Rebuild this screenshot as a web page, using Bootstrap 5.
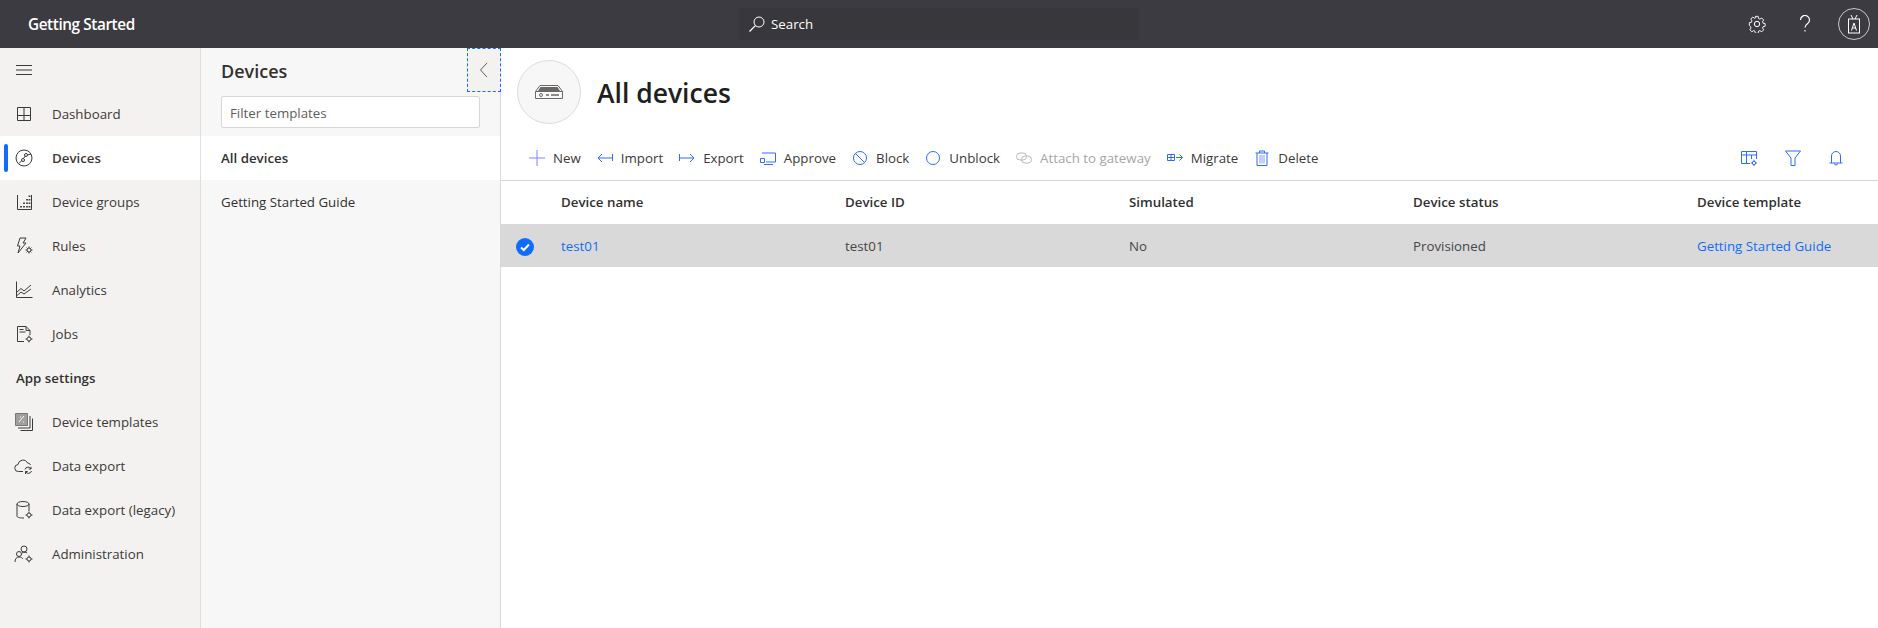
<!DOCTYPE html>
<html lang="en">
<head>
  <meta charset="UTF-8">
  <title>Getting Started</title>
  <link href="https://cdn.jsdelivr.net/npm/bootstrap@5.3.0/dist/css/bootstrap.min.css" rel="stylesheet">
  <style>
    html, body {
      height: 100%;
    }

    body {
      font-family: "Open Sans", "Noto Sans", sans-serif;
      font-size: 13.3px;
      color: #323130;
      background: #fff;
      overflow: hidden;
    }

    svg {
      display: block;
      flex: none;
      fill: none;
      stroke: currentColor;
      stroke-width: 1;
    }

    .top-bar {
      height: 48px;
      background: #3c3b41;
      color: #fff;
    }

    .app-name {
      width: 739px;
      padding-left: 28px;
      font-size: 15.3px;
      font-weight: 600;
      letter-spacing: -0.4px;
    }

    .search-box {
      width: 400px;
      height: 32px;
      background: #38373c;
      border-radius: 2px;
      padding-left: 9px;
      gap: 5px;
    }

    .search-box span {
      padding-top: 2px;
    }

    .top-icons {
      margin-left: auto;
      padding-right: 8px;
      gap: 24px;
    }

    .top-icons button {
      width: 24px;
      height: 24px;
      padding: 0;
      border: 0;
      background: none;
      color: #fff;
    }

    .avatar-ring {
      width: 32px;
      height: 32px;
      border: 1px solid #c8c8c8;
      border-radius: 50%;
      margin-left: -3px;
    }

    .page-body {
      height: 580px;
    }

    .side-nav {
      width: 201px;
      background: #f3f2f1;
      border-right: 1px solid #e1dfdd;
    }

    .nav-row {
      height: 44px;
      padding-left: 16px;
      color: #3b3a39;
      text-decoration: none;
      position: relative;
    }

    .nav-label {
      padding-top: 2px;
    }

    .nav-row svg {
      width: 20px;
      height: 20px;
      margin-left: -2px;
      margin-right: 18px;
    }

    .nav-row.is-active {
      background: #fff;
      font-weight: 600;
    }

    .nav-row.is-active::before {
      content: "";
      position: absolute;
      left: 4px;
      top: 8px;
      width: 4px;
      height: 28px;
      border-radius: 2px;
      background: #0f6cff;
    }

    .nav-title {
      height: 44px;
      padding: 2px 0 0 16px;
      font-weight: 600;
    }

    .template-panel {
      width: 300px;
      background: #f7f7f7;
      border-right: 1px solid #d8d8d8;
      position: relative;
    }

    .panel-title {
      padding: 10px 20px 0;
      height: 48px;
      font-size: 18px;
      font-weight: 600;
    }

    .panel-filter {
      margin: 0 20px 8px;
      width: 259px;
      height: 32px;
      padding: 1px 8px 0;
      border: 1px solid #d6d6d6;
      border-radius: 2px;
      font-size: 13.3px;
      color: #323130;
    }

    .panel-filter::placeholder {
      color: #605e5c;
    }

    .template-row {
      height: 44px;
      padding: 2px 0 0 20px;
      color: #323130;
      text-decoration: none;
    }

    .template-row.is-active {
      background: #fff;
      font-weight: 600;
    }

    .collapse-btn {
      position: absolute;
      top: 0;
      right: -1px;
      width: 34px;
      height: 44px;
      padding: 0;
      background: #f3f2f1;
      border: 1px dashed #0f6cff;
      color: #605e5c;
    }

    .device-area {
      min-width: 0;
    }

    .device-head {
      height: 88px;
      padding: 12px 0 0 16px;
      gap: 16px;
    }

    .device-glyph {
      width: 64px;
      height: 64px;
      background: #f7f7f7;
      border: 1px solid #dcdcdc;
      border-radius: 50%;
      color: #6a6866;
    }

    .device-head h1 {
      padding-top: 18px;
      font-size: 26.5px;
      font-weight: 600;
      margin: 0;
      color: #201f1e;
    }

    .cmd-bar {
      height: 45px;
      padding: 0 31px 0 20px;
      border-bottom: 1px solid #d8d8d8;
    }

    .cmd-btn {
      padding: 0 8px;
      gap: 8px;
      border: 0;
      background: none;
      color: #3b3a39;
      font-size: 13.3px;
      white-space: nowrap;
    }

    .cmd-btn span {
      padding-top: 2px;
    }

    .cmd-btn svg {
      color: #2f6bff;
    }

    .cmd-btn svg.plus-mark {
      color: #7d86ff;
    }

    .cmd-btn:disabled {
      color: #a8a6a4;
      opacity: 1;
    }

    .cmd-btn:disabled svg {
      color: #bdbbb9;
    }

    .cmd-side {
      margin-left: auto;
      gap: 28px;
      color: #2f6bff;
    }

    .device-grid {
      table-layout: fixed;
      margin: 0;
      --bs-table-color: #323130;
    }

    .device-grid th, .device-grid td {
      height: 43px;
      padding: 0;
      vertical-align: middle;
      border: 0;
      font-size: 13.3px;
    }

    .device-grid th {
      font-weight: 600;
    }

    .device-grid tbody td {
      --bs-table-bg: #d9d9d9;
      color: #484644;
      padding-top: 2px;
    }

    .device-grid a {
      color: #0f6cff;
      text-decoration: none;
    }

    .col-check {
      width: 60px;
    }

    .col-data {
      width: 284px;
    }

    .check-dot {
      margin-left: 15px;
    }
  </style>
</head>
<body>
  <header class="top-bar d-flex align-items-center">
    <div class="app-name">Getting Started</div>
    <div class="search-box d-flex align-items-center">
      <svg width="18" height="18" viewBox="0 0 18 18"><circle cx="11" cy="7" r="5"/><path d="M7.400 10.600 1.500 16.500" stroke-width="1.300"/></svg>
      <span>Search</span>
    </div>
    <div class="top-icons d-flex align-items-center">
      <button type="button" class="d-flex align-items-center justify-content-center" aria-label="Settings">
        <svg width="18" height="18" viewBox="0 0 18 18" stroke-width="1.300"><circle cx="9" cy="9" r="2.700"/><path d="M7.500 1h3l.4 2.300 1.500.7 2-1.200 2 2.100-1.200 2 .6 1.500 2.200.4v2.800l-2.200.5-.6 1.400 1.200 2-2 2.100-2-1.200-1.500.6-.4 2.300h-3l-.4-2.300-1.500-.6-2 1.200-2-2.100 1.200-2-.6-1.400L1 10.600V7.800l2.200-.4.6-1.500-1.200-2 2-2.100 2 1.200 1.500-.7z" transform="translate(.4 .4) scale(.93)"/></svg>
      </button>
      <button type="button" class="d-flex align-items-center justify-content-center" aria-label="Help">
        <svg width="14" height="18" viewBox="0 0 14 18"><path d="M2.500 5a4.500 4.500 0 1 1 7 3.700C8 9.800 7 10.500 7 12.500M7 15v1.500" stroke-width="1.200"/></svg>
      </button>
      <div class="avatar-ring d-flex align-items-center justify-content-center">
        <svg width="16" height="20" viewBox="0 0 16 20"><path d="M5 1l2 4M11 1 9 5"/><rect x="2.500" y="5" width="11" height="14"/><path d="M5.500 16.500 8 9l2.500 7.500M6.300 14h3.400"/></svg>
      </div>
    </div>
  </header>

  <div class="page-body d-flex">
    <nav class="side-nav flex-shrink-0">
      <a class="nav-row d-flex align-items-center" href="#" aria-label="Menu">
        <svg viewBox="0 0 20 20"><path d="M2 5.500h16M2 10h16M2 14.500h16"/></svg>
      </a>
      <a class="nav-row d-flex align-items-center" href="#">
        <svg viewBox="0 0 20 20"><path d="M3.500 3.500h13v13h-13zM3.500 11.500h13M10 3.500v13"/></svg>
        <span class="nav-label">Dashboard</span>
      </a>
      <a class="nav-row is-active d-flex align-items-center" href="#">
        <svg viewBox="0 0 20 20"><circle cx="10" cy="10" r="8"/><circle cx="12" cy="7" r="1.500"/><circle cx="9" cy="12" r="1.500"/><path d="M11 8.200 9.500 10.500M7.700 12.700 5 15.500M13.500 7 17 6"/></svg>
        <span class="nav-label">Devices</span>
      </a>
      <a class="nav-row d-flex align-items-center" href="#">
        <svg viewBox="0 0 20 20"><path d="M3.500 3v14.500h14V3"/><path d="M7 15.500V14M10 15.500V14M13 15.500V14M15.500 15.500V14M10 12v-1.500M13 12v-1.500M15.500 12v-1.500M13 8.500V7M15.500 8.500V7M15.500 5V3.500" stroke-width="1.800"/></svg>
        <span class="nav-label">Device groups</span>
      </a>
      <a class="nav-row d-flex align-items-center" href="#">
        <svg viewBox="0 0 20 20"><path d="M6 2h6L9 7h3l-8 10 2-7H3.500z"/><circle cx="15" cy="14" r="2"/><path d="M15 10.500v1.500M15 16v1.500M11.500 14H13M17 14h1.500M12.600 11.600l1 1M16.400 15.400l1 1M17.400 11.600l-1 1M13.600 15.400l-1 1"/></svg>
        <span class="nav-label">Rules</span>
      </a>
      <a class="nav-row d-flex align-items-center" href="#">
        <svg viewBox="0 0 20 20"><path d="M2.500 1.500v16h16M3 12l4-3.500 3 2.500 7-6M3 15.500l4-3.500 3 2 7-5"/></svg>
        <span class="nav-label">Analytics</span>
      </a>
      <a class="nav-row d-flex align-items-center" href="#">
        <svg viewBox="0 0 20 20"><path d="M10 17.500H3.500v-15H12l4 4V11M12 2.500v4h4M5.500 5.500h4M5.500 8h6"/><circle cx="15" cy="15" r="2"/><path d="M15 11.500V13M15 17v1.500M11.500 15H13M17 15h1.500"/></svg>
        <span class="nav-label">Jobs</span>
      </a>
      <div class="nav-title d-flex align-items-center">App settings</div>
      <a class="nav-row d-flex align-items-center" href="#">
        <svg viewBox="0 0 20 20"><path d="M1.500 1.500h12v12h-12z" fill="#a19f9d" stroke="#797775"/><path d="M5 10l5-6M6 5h1M9 10h1" stroke="#fff"/><path d="M4 16h12V4M6.500 18.500h12v-12"/></svg>
        <span class="nav-label">Device templates</span>
      </a>
      <a class="nav-row d-flex align-items-center" href="#">
        <svg viewBox="0 0 20 20"><path d="M9 15.500H4.500a3.500 3.500 0 0 1-.5-7 5 5 0 0 1 9.500-1.500 3 3 0 0 1 3 2"/><path d="M11 13.500a3.200 3.200 0 0 1 6-.5M17.500 15a3.200 3.200 0 0 1-6 .5M17 10.800V13h-2.200M11.500 18v-2.500h2.200"/></svg>
        <span class="nav-label">Data export</span>
      </a>
      <a class="nav-row d-flex align-items-center" href="#">
        <svg viewBox="0 0 20 20"><ellipse cx="9" cy="4" rx="6" ry="2.500"/><path d="M3 4v12c0 1.300 2.500 2 6 2h1M15 4v7"/><circle cx="15" cy="15" r="2"/><path d="M15 11.500V13M15 17v1.500M11.500 15H13M17 15h1.500"/></svg>
        <span class="nav-label">Data export (legacy)</span>
      </a>
      <a class="nav-row d-flex align-items-center" href="#">
        <svg viewBox="0 0 20 20"><circle cx="10" cy="5" r="3"/><circle cx="5" cy="10" r="2.500"/><path d="M1 18c0-3 1.500-5 4-5s3 1 4 2M8 9c2-1 4-1 5 0"/><circle cx="15" cy="15" r="2"/><path d="M15 11.500V13M15 17v1.500M11.500 15H13M17 15h1.500"/></svg>
        <span class="nav-label">Administration</span>
      </a>
    </nav>

    <aside class="template-panel flex-shrink-0">
      <div class="panel-title">Devices</div>
      <input type="text" class="panel-filter d-block" placeholder="Filter templates">
      <a class="template-row is-active d-flex align-items-center" href="#">All devices</a>
      <a class="template-row d-flex align-items-center" href="#">Getting Started Guide</a>
      <button type="button" class="collapse-btn d-flex align-items-center justify-content-center" aria-label="Collapse">
        <svg width="10" height="16" viewBox="0 0 10 16"><path d="M8 1 1.500 8 8 15"/></svg>
      </button>
    </aside>

    <main class="device-area flex-grow-1">
      <div class="device-head d-flex">
        <div class="device-glyph d-flex align-items-center justify-content-center">
          <svg width="30" height="16" viewBox="0 0 30 16"><path d="M6 1.500h18l4.500 6v7h-27v-7zM1.500 7.500h27"/><path d="M6.500 3h17l2.500 4H4z" fill="currentColor" stroke="none"/><circle cx="7" cy="11" r="1.500"/><path d="M12 11h3M17 11h8" stroke-width="1.300"/></svg>
        </div>
        <h1>All devices</h1>
      </div>

      <div class="cmd-bar d-flex align-items-center">
        <button type="button" class="cmd-btn d-flex align-items-center"><svg class="plus-mark" width="16" height="16" viewBox="0 0 16 16"><path d="M8 0v16M0 8h16"/></svg><span>New</span></button>
        <button type="button" class="cmd-btn d-flex align-items-center"><svg width="16" height="16" viewBox="0 0 16 16"><path d="M15.500 4v7M15 8H1M5 4 1 8l4 4"/></svg><span>Import</span></button>
        <button type="button" class="cmd-btn d-flex align-items-center"><svg width="16" height="16" viewBox="0 0 16 16"><path d="M.5 4v7M1 8h14M11 4l4 4-4 4"/></svg><span>Export</span></button>
        <button type="button" class="cmd-btn d-flex align-items-center"><svg width="16" height="16" viewBox="0 0 16 16"><path d="M2 3h13.500v9H6M4 14.500h9M.5 8.500h4v4h-4z"/></svg><span>Approve</span></button>
        <button type="button" class="cmd-btn d-flex align-items-center"><svg width="16" height="16" viewBox="0 0 16 16"><circle cx="8" cy="8" r="6.500"/><path d="m3.500 3.500 9 9"/></svg><span>Block</span></button>
        <button type="button" class="cmd-btn d-flex align-items-center"><svg width="16" height="16" viewBox="0 0 16 16"><circle cx="8" cy="8" r="6.500"/></svg><span>Unblock</span></button>
        <button type="button" class="cmd-btn d-flex align-items-center" disabled><svg width="16" height="16" viewBox="0 0 16 16"><rect x=".5" y="3" width="10" height="7" rx="3.500"/><rect x="5.500" y="6" width="10" height="7" rx="3.500"/></svg><span>Attach to gateway</span></button>
        <button type="button" class="cmd-btn d-flex align-items-center"><svg width="16" height="16" viewBox="0 0 16 16"><path d="M.5 4.500h7v6h-7zM4 4.500v6M.5 7.500h7M9 7.500h6.500M12.500 4.500l3 3-3 3"/></svg><span>Migrate</span></button>
        <button type="button" class="cmd-btn d-flex align-items-center"><svg width="16" height="16" viewBox="0 0 16 16"><path d="M1.500 3h13M5.500 3V1h5v2M3 3v12.500h10V3"/><path d="M5 5h6v8.500H5z" fill="#c4ceff" stroke="none"/></svg><span>Delete</span></button>
        <div class="cmd-side d-flex align-items-center">
          <svg width="16" height="16" viewBox="0 0 16 16"><path d="M9 13.500H.5v-12h15V9M.5 5h15M5.500 1.500v12M10.500 5v4"/><circle cx="13" cy="13" r="1.700"/><path d="M13 9.800v1.400M13 14.800v1.200M9.800 13h1.400M14.800 13h1.200"/></svg>
          <svg width="16" height="16" viewBox="0 0 16 16"><path d="M.5 1h15L10 8v7.500H6V8z"/></svg>
          <svg class="me-1" width="14" height="16" viewBox="0 0 14 16"><path d="M2.500 13V6a4.500 4.500 0 0 1 9 0v7M.5 13h13M5.500 13.500a1.500 1.500 0 0 0 3 0"/></svg>
        </div>
      </div>

      <table class="table device-grid">
        <colgroup>
          <col class="col-check">
          <col class="col-data">
          <col class="col-data">
          <col class="col-data">
          <col class="col-data">
          <col>
        </colgroup>
        <thead>
          <tr>
            <th></th>
            <th>Device name</th>
            <th>Device ID</th>
            <th>Simulated</th>
            <th>Device status</th>
            <th>Device template</th>
          </tr>
        </thead>
        <tbody>
          <tr>
            <td>
              <svg class="check-dot" width="18" height="18" viewBox="0 0 18 18"><circle cx="9" cy="9" r="9" fill="#0f6cff" stroke="none"/><path d="m5 9.500 2.800 2.500L13 6.500" stroke="#fff" stroke-width="2"/></svg>
            </td>
            <td><a href="#">test01</a></td>
            <td>test01</td>
            <td>No</td>
            <td>Provisioned</td>
            <td><a href="#">Getting Started Guide</a></td>
          </tr>
        </tbody>
      </table>
    </main>
  </div>
</body>
</html>
